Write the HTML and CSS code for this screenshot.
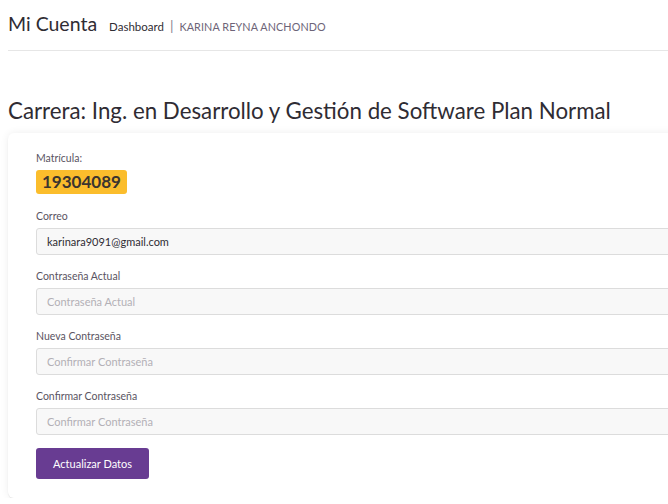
FILE: index.html
```html
<!DOCTYPE html>
<html lang="es">
<head>
<meta charset="utf-8">
<title>Mi Cuenta</title>
<link rel="stylesheet" href="styles.css">
</head>
<body>
<div class="page">
  <header class="topbar">
    <h1 class="brand">Mi Cuenta</h1>
    <nav class="crumbs">
      <a class="crumb-link" href="#">Dashboard</a>
      <span class="sep">|</span>
      <span class="user">KARINA REYNA ANCHONDO</span>
    </nav>
  </header>
  <h2 class="career">Carrera: Ing. en Desarrollo y Gestión de Software Plan Normal</h2>
  <form class="card">
    <div class="field">
      <label class="label">Matrícula:</label>
      <span class="badge">19304089</span>
    </div>
    <div class="field">
      <label class="label">Correo</label>
      <input class="input" type="text" value="karinara9091@gmail.com">
    </div>
    <div class="field">
      <label class="label">Contraseña Actual</label>
      <input class="input" type="password" placeholder="Contraseña Actual">
    </div>
    <div class="field">
      <label class="label">Nueva Contraseña</label>
      <input class="input" type="password" placeholder="Confirmar Contraseña">
    </div>
    <div class="field">
      <label class="label">Confirmar Contraseña</label>
      <input class="input" type="password" placeholder="Confirmar Contraseña">
    </div>
    <button class="btn" type="button">Actualizar Datos</button>
  </form>
</div>
</body>
</html>
```

FILE: styles.css
```css
html, body {
  margin: 0;
  padding: 0;
  background: #ffffff;
  overflow: hidden;
}
body {
  font-family: "Lato", "Noto Sans", sans-serif;
  color: #37333d;
}
.page {
  width: 720px;
  padding: 0 0 0 8px;
}
.topbar {
  display: flex;
  align-items: baseline;
  gap: 12px;
  height: 51px;
  box-sizing: border-box;
  padding-top: 12px;
  border-bottom: 1px solid #e6e6e6;
}
.brand {
  margin: 0;
  font-size: 19.5px;
  font-weight: 400;
  color: #2f2c33;
}
.crumbs {
  display: flex;
  align-items: baseline;
  gap: 6px;
  font-size: 11.5px;
}
.crumb-link {
  color: #2f2c33;
  text-decoration: none;
}
.sep {
  color: #8a8590;
  font-size: 14px;
}
.user {
  color: #6d6478;
  font-size: 10.8px;
  letter-spacing: 0.1px;
}
.career {
  margin: 46px 0 0 0;
  font-size: 22.3px;
  font-weight: 400;
  line-height: 28px;
  color: #2f2c33;
}
.card {
  margin-top: 8px;
  background: #fff;
  border-radius: 6px;
  box-shadow: 0 0 8px rgba(0, 0, 0, 0.07), 0 1px 1px rgba(0,0,0,0.08);
  padding: 18px 0 19px 28px;
  display: flex;
  flex-direction: column;
  gap: 14px;
}
.field {
  display: flex;
  flex-direction: column;
  gap: 5px;
}
.label {
  font-size: 10.5px;
  color: #5a5462;
  line-height: 14px;
}
.badge {
  align-self: flex-start;
  background: #fbbd2c;
  color: #3b3530;
  font-size: 17px;
  font-weight: 700;
  line-height: 24px;
  margin-bottom: 1px;
  padding: 0 6px;
  border-radius: 3px;
}
.input {
  height: 27px;
  box-sizing: border-box;
  border: 1px solid #dcdcdc;
  border-radius: 3px;
  background: #f8f8f8;
  padding: 0 10px;
  font-family: inherit;
  font-size: 11px;
  color: #2f2c33;
  outline: none;
}
.input::placeholder {
  color: #b3b0b6;
}
.btn {
  align-self: flex-start;
  margin-top: -1px;
  width: 113px;
  height: 31px;
  background: #683c92;
  color: #fff;
  border: none;
  border-radius: 3px;
  font-family: inherit;
  font-size: 11px;
}
```
